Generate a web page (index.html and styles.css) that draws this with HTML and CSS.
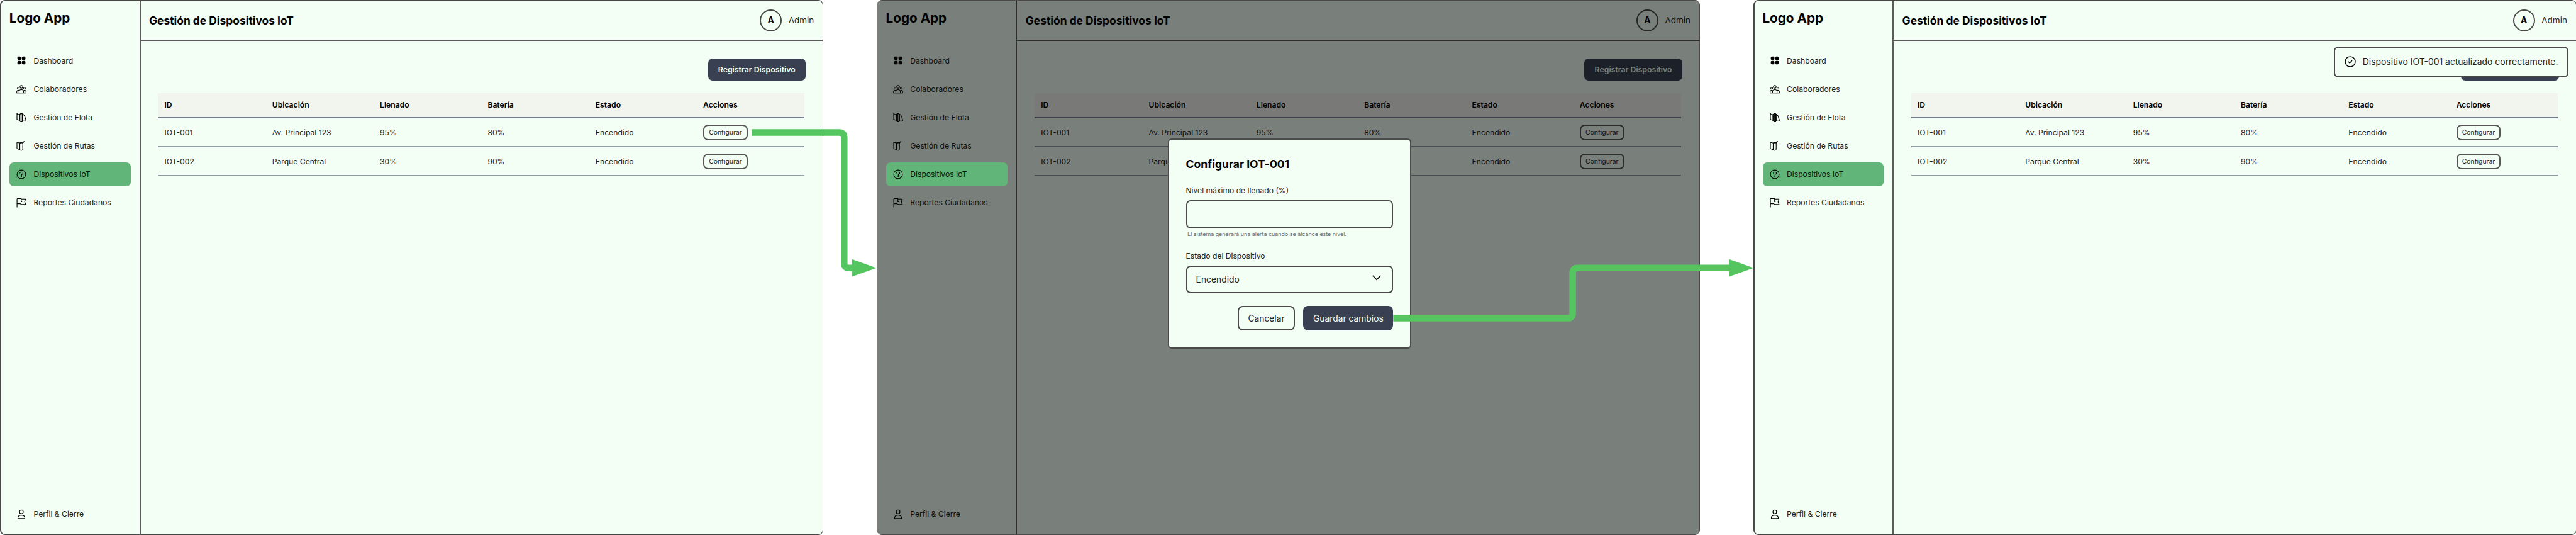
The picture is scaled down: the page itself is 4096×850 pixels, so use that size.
FILE: index.html
```
<!DOCTYPE html>
<html lang="es">
<head>
<meta charset="utf-8">
<title>Gestión de Dispositivos IoT</title>
<link rel="stylesheet" href="styles.css">
</head>
<body>
<svg class="sprite" aria-hidden="true">
  <symbol id="i-dashboard" viewBox="0 0 16 16"><g fill="#000"><rect x="1.7" y="1.7" width="5.7" height="5.5" rx="1.7"/><rect x="8.7" y="1.7" width="5.7" height="5.5" rx="1.7"/><rect x="1.7" y="8.7" width="5.7" height="5.6" rx="1.7"/><rect x="8.7" y="8.7" width="5.7" height="5.6" rx="1.7"/></g></symbol>
  <symbol id="i-team" viewBox="0 0 16 16"><g fill="none" stroke="#000" stroke-width="1.1" stroke-linejoin="round"><circle cx="8" cy="4" r="2.2"/><circle cx="3.1" cy="6.2" r="1.4"/><circle cx="12.9" cy="6.2" r="1.4"/><path d="M4.4 13.7v-2.2c0-1.7 1.5-3 3.6-3s3.6 1.3 3.6 3v2.2z"/><path d="M4.3 9.6H2.8C1.5 9.6.7 10.4.7 11.6v2.1h3.700M11.7 9.600h1.500c1.300 0 2.100.800 2.100 2v2.100h-3.700"/></g></symbol>
  <symbol id="i-fleet" viewBox="0 0 16 16"><g fill="none" stroke="#000" stroke-width="1.15" stroke-linejoin="round" stroke-linecap="round"><path d="M1 1.300v9.500l4.200 1.500V3.200L2 2.600z"/><path d="M5.200 2.800 7 1.600h2.300l1 1.300v10l-1 1.500H6.800l-1.600-1.500zM7.300 2v12.200M9.300 2v12.200"/><path d="M10.300 2.600c2.200.700 3.500 3.500 4 6.200l1 3c.200 1-.600 1.600-1.500 1.600h-3.500"/></g></symbol>
  <symbol id="i-routes" viewBox="0 0 16 16"><g fill="none" stroke="#000" stroke-width="1.1" stroke-linejoin="round" stroke-linecap="round"><path d="M1 1.700v9.600c0 .700.300 1.100.900 1.300l3.600 1.200V3.300L1.800 2.300z"/><path d="M5.500 3.200 10.200 2.700v10.400c0 .900-.500 1.500-1.400 1.500H7c-.700 0-1.500-.300-1.500-1.200z"/><path d="M5.600 3.100 12.700.900M10.200 3.200l2.200-2"/></g></symbol>
  <symbol id="i-help" viewBox="0 0 16 16"><g fill="none" stroke="#000" stroke-width="1.15" stroke-linecap="round"><circle cx="8" cy="8" r="6.9"/><path d="M5.600 6c.400-1.200 1.300-1.800 2.500-1.800 1.500 0 2.500.900 2.500 2 0 1.600-2.400 1.500-2.400 3.200v.300"/></g><circle cx="8.2" cy="11.6" r=".75" fill="#000"/></symbol>
  <symbol id="i-flag" viewBox="0 0 16 16"><g fill="none" stroke="#000" stroke-width="1.15" stroke-linejoin="round" stroke-linecap="round"><path d="M1.100 15V2.700c0-.900.500-1.400 1.400-1.400h5.200v4.800M7.700 2.200h7l-1.500 4.300 1.600 4.300H7.700L6.300 9.600H1.300M7.700 4.600v1.800h1"/></g></symbol>
  <symbol id="i-user" viewBox="0 0 16 16"><g fill="none" stroke="#000" stroke-width="1.15" stroke-linejoin="round"><circle cx="8" cy="4.3" r="3"/><path d="M2.500 14.800v-.900c0-2.500 2.100-4.300 5.500-4.300s5.500 1.800 5.500 4.300v.900z"/></g></symbol>
  <symbol id="i-check" viewBox="0 0 18 18"><g fill="none" stroke="#000" stroke-width="1.5" stroke-linecap="round" stroke-linejoin="round"><circle cx="9" cy="9" r="8"/><path d="M6.400 9.200 8.200 11l3.400-3.600"/></g></symbol>
</svg>

<main class="board">
  <section class="screen">
    <aside class="sidebar">
      <h2 class="logo">Logo App</h2>
      <nav class="nav">
        <a class="item"><svg class="icon"><use href="#i-dashboard"/></svg><span>Dashboard</span></a>
        <a class="item"><svg class="icon"><use href="#i-team"/></svg><span>Colaboradores</span></a>
        <a class="item"><svg class="icon"><use href="#i-fleet"/></svg><span>Gestión de Flota</span></a>
        <a class="item"><svg class="icon"><use href="#i-routes"/></svg><span>Gestión de Rutas</span></a>
        <a class="item active"><svg class="icon"><use href="#i-help"/></svg><span>Dispositivos IoT</span></a>
        <a class="item"><svg class="icon"><use href="#i-flag"/></svg><span>Reportes Ciudadanos</span></a>
        <a class="item last"><svg class="icon"><use href="#i-user"/></svg><span>Perfil &amp; Cierre</span></a>
      </nav>
    </aside>
    <div class="main">
      <header class="topbar"><h1 class="title">Gestión de Dispositivos IoT</h1><span class="avatar">A</span><span class="admin">Admin</span></header>
      <div class="content">
        <div class="actions"><button class="primary">Registrar Dispositivo</button></div>
        <div class="table">
          <div class="row head"><span>ID</span><span>Ubicación</span><span>Llenado</span><span>Batería</span><span>Estado</span><span>Acciones</span></div>
          <div class="row"><span>IOT-001</span><span>Av. Principal 123</span><span>95%</span><span>80%</span><span>Encendido</span><span><button class="small">Configurar</button></span></div>
          <div class="row"><span>IOT-002</span><span>Parque Central</span><span>30%</span><span>90%</span><span>Encendido</span><span><button class="small">Configurar</button></span></div>
        </div>
      </div>
    </div>
  </section>

  <section class="screen dimmed">
    <aside class="sidebar">
      <h2 class="logo">Logo App</h2>
      <nav class="nav">
        <a class="item"><svg class="icon"><use href="#i-dashboard"/></svg><span>Dashboard</span></a>
        <a class="item"><svg class="icon"><use href="#i-team"/></svg><span>Colaboradores</span></a>
        <a class="item"><svg class="icon"><use href="#i-fleet"/></svg><span>Gestión de Flota</span></a>
        <a class="item"><svg class="icon"><use href="#i-routes"/></svg><span>Gestión de Rutas</span></a>
        <a class="item active"><svg class="icon"><use href="#i-help"/></svg><span>Dispositivos IoT</span></a>
        <a class="item"><svg class="icon"><use href="#i-flag"/></svg><span>Reportes Ciudadanos</span></a>
        <a class="item last"><svg class="icon"><use href="#i-user"/></svg><span>Perfil &amp; Cierre</span></a>
      </nav>
    </aside>
    <div class="main">
      <header class="topbar"><h1 class="title">Gestión de Dispositivos IoT</h1><span class="avatar">A</span><span class="admin">Admin</span></header>
      <div class="content">
        <div class="actions"><button class="primary">Registrar Dispositivo</button></div>
        <div class="table">
          <div class="row head"><span>ID</span><span>Ubicación</span><span>Llenado</span><span>Batería</span><span>Estado</span><span>Acciones</span></div>
          <div class="row"><span>IOT-001</span><span>Av. Principal 123</span><span>95%</span><span>80%</span><span>Encendido</span><span><button class="small">Configurar</button></span></div>
          <div class="row"><span>IOT-002</span><span>Parque Central</span><span>30%</span><span>90%</span><span>Encendido</span><span><button class="small">Configurar</button></span></div>
        </div>
      </div>
    </div>
    <div class="overlay"></div>
    <div class="modal">
      <h3 class="modal-title">Configurar IOT-001</h3>
      <label class="label">Nivel máximo de llenado (%)</label>
      <div class="field"></div>
      <p class="hint">El sistema generará una alerta cuando se alcance este nivel.</p>
      <label class="label">Estado del Dispositivo</label>
      <div class="field select"><span>Encendido</span><svg class="chevron" viewBox="0 0 14 9"><path d="M1.300 1.300 7 7.300l5.700-6" fill="none" stroke="#111" stroke-width="1.7" stroke-linecap="round" stroke-linejoin="round"/></svg></div>
      <div class="buttons"><button class="cancel">Cancelar</button><button class="save">Guardar cambios</button></div>
    </div>
  </section>

  <section class="screen">
    <aside class="sidebar">
      <h2 class="logo">Logo App</h2>
      <nav class="nav">
        <a class="item"><svg class="icon"><use href="#i-dashboard"/></svg><span>Dashboard</span></a>
        <a class="item"><svg class="icon"><use href="#i-team"/></svg><span>Colaboradores</span></a>
        <a class="item"><svg class="icon"><use href="#i-fleet"/></svg><span>Gestión de Flota</span></a>
        <a class="item"><svg class="icon"><use href="#i-routes"/></svg><span>Gestión de Rutas</span></a>
        <a class="item active"><svg class="icon"><use href="#i-help"/></svg><span>Dispositivos IoT</span></a>
        <a class="item"><svg class="icon"><use href="#i-flag"/></svg><span>Reportes Ciudadanos</span></a>
        <a class="item last"><svg class="icon"><use href="#i-user"/></svg><span>Perfil &amp; Cierre</span></a>
      </nav>
    </aside>
    <div class="main">
      <header class="topbar"><h1 class="title">Gestión de Dispositivos IoT</h1><span class="avatar">A</span><span class="admin">Admin</span></header>
      <div class="content">
        <div class="actions"><button class="primary">Registrar Dispositivo</button></div>
        <div class="table">
          <div class="row head"><span>ID</span><span>Ubicación</span><span>Llenado</span><span>Batería</span><span>Estado</span><span>Acciones</span></div>
          <div class="row"><span>IOT-001</span><span>Av. Principal 123</span><span>95%</span><span>80%</span><span>Encendido</span><span><button class="small">Configurar</button></span></div>
          <div class="row"><span>IOT-002</span><span>Parque Central</span><span>30%</span><span>90%</span><span>Encendido</span><span><button class="small">Configurar</button></span></div>
        </div>
      </div>
    </div>
    <div class="toast"><svg class="toast-icon"><use href="#i-check"/></svg><span>Dispositivo IOT-001 actualizado correctamente.</span></div>
  </section>

  <svg class="arrows" viewBox="0 0 4096 850">
    <g fill="none" stroke="#55c560" stroke-width="10.5">
      <path d="M1196 210.600H1334.500Q1342.300 210.600 1342.300 218.400V418Q1342.300 425.800 1350 425.800H1356"/>
      <path d="M2215.300 505.600H2492.800Q2500.600 505.600 2500.600 497.800V433.600Q2500.600 425.800 2508.400 425.800H2751"/>
    </g>
    <path d="M1354.700 411.700 1393.700 425.700 1354.700 439.600zM2749.400 411.700 2788.300 425.700 2749.400 439.600z" fill="#55c560"/>
  </svg>
</main>
</body>
</html>
```
FILE: styles.css
```
* { box-sizing: border-box; margin: 0; padding: 0; }
body { background: #fff; font-family: Inter, sans-serif; font-size: 12.15px; color: #1c211d; overflow: hidden; }
button { font-family: inherit; color: inherit; display: block; }
.sprite { position: absolute; width: 0; height: 0; }

.board { position: relative; display: flex; gap: 84.5px; width: 4096px; height: 850px; }
.screen {
  position: relative; flex: none; display: flex; width: 1309.3px; height: 850px; overflow: hidden;
  background: #f3fef5; border: 1px solid #4a4748; border-left-width: 2px; border-radius: 8px;
}
.dimmed { border-left-width: 1px; }
.dimmed .sidebar { width: 222.5px; padding-left: 15.3px; }

.sidebar { flex: none; width: 221.5px; padding: 14px 14.3px 0 14.3px; border-right: 2px solid #5a5b5a; display: flex; flex-direction: column; }
.logo { font-size: 20.7px; font-weight: 700; line-height: 28px; color: #000; margin-left: -1.5px; }
.nav { flex: 1; display: flex; flex-direction: column; gap: 6.7px; padding: 34.3px 0 13.3px; margin-left: -1px; }
.item { display: flex; align-items: center; gap: 11px; height: 38.4px; padding-left: 11.2px; border-radius: 7px; margin-right: -.7px; }
.item.active { background: #62b578; color: #0c120d; }
.item.last { margin-top: auto; }
.icon { width: 16px; height: 16px; flex: none; }

.main { flex: 1; }
.topbar { display: flex; align-items: center; height: 64px; padding: 0 14px 0 13.5px; border-bottom: 2px solid #5a5b5a; }
.title { font-size: 17.4px; font-weight: 700; color: #000; margin-right: auto; }
.avatar { display: flex; align-items: center; justify-content: center; width: 35px; height: 35px; border: 2px solid #4a4a4a; border-radius: 50%; font-size: 13.85px; font-weight: 700; color: #000; }
.admin { font-size: 13.5px; margin-left: 10.5px; }

.content { padding: 27.7px 27.4px 0 27.5px; }
.actions { display: flex; justify-content: flex-end; }
.primary { width: 155.3px; height: 35px; border: 0; border-radius: 7px; background: #384051; color: #f3fef5; font-size: 12.3px; font-weight: 600; }
.table { width: 1028px; margin-top: 20.6px; }
.row { display: grid; grid-template-columns: repeat(6, 1fr); align-items: center; height: 46.4px; padding-top: 1px; border-bottom: 2px solid #909ea2; }
.row > span { padding-left: 10.4px; }
.row.head { height: 39.3px; padding-top: 0; background: #f2f4ee; border-bottom-color: #767d8a; font-weight: 600; color: #000; }
.small { width: 70.7px; height: 24.5px; border: 2px solid #555655; border-radius: 8px; background: none; font-size: 10.4px; }

.overlay { position: absolute; inset: 0; background: rgba(0, 0, 0, .5); }
.dimmed .item.active { position: relative; z-index: 1; background: #62b578; }
.modal {
  position: absolute; z-index: 2; left: 462.3px; top: 218.6px; width: 387.3px; height: 334.2px; padding: 28.4px 27px 0;
  border: 2px solid #4a4a4a; border-radius: 6px; background: #f3fef5; display: flex; flex-direction: column;
}
.modal-title { font-size: 17.5px; font-weight: 700; line-height: 22px; color: #000; margin-left: -.6px; }
.label { font-size: 12.1px; line-height: 16px; margin: 23.2px 0 0 -.6px; }
.field { height: 45.2px; margin-top: 7px; border: 2px solid #4a4a4a; border-radius: 7px; }
.hint { font-size: 8.9px; line-height: 12px; margin: 2.6px 0 -2px 1.8px; color: #6b7280; white-space: nowrap; }
.select { height: 43.7px; display: flex; align-items: center; justify-content: space-between; padding: 0 17px 0 13.5px; font-size: 13.85px; }
.chevron { width: 14px; height: 9px; margin-top: -5px; }
.buttons { display: flex; justify-content: flex-end; gap: 13.8px; margin-top: 20.5px; }
.buttons button { height: 38.5px; border-radius: 8px; font-size: 13.8px; }
.buttons .cancel { width: 90.2px; border: 2px solid #4a4a4a; background: none; }
.buttons .save { width: 143px; border: 0; background: #384051; color: #f3fef5; }

.toast {
  position: absolute; top: 73px; right: 11.7px; width: 373.4px; height: 48.7px; padding-left: 15px;
  display: flex; align-items: center; gap: 11px; border: 2px solid #4a4a4a; border-radius: 7px; background: #f3fef5; font-size: 13.9px; white-space: nowrap;
}
.toast-icon { width: 18px; height: 18px; flex: none; }
.arrows { position: absolute; inset: 0; width: 4096px; height: 850px; z-index: 3; }
```
